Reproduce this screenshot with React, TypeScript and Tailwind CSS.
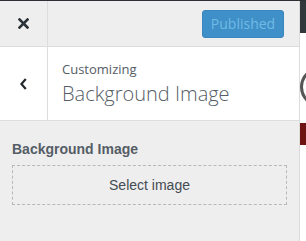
export default function App() {
  return (
    <div className="flex w-[306px] h-[241px] overflow-hidden border-t border-[#2c3034] font-['Liberation_Sans',Arial,sans-serif]">
      {/* Customizer panel */}
      <div className="w-[300px] shrink-0 flex flex-col bg-[#eeeeee] border-r border-[#dcdcdc]">
        {/* Header actions */}
        <div className="flex h-[46px] border-b border-[#dddddd]">
          <button className="w-[48px] shrink-0 flex items-center justify-center border-r border-[#dddddd] text-[#2c3338]">
            <svg width="11" height="11" viewBox="0 0 11 11">
              <path d="M1.5 1.5 L9.5 9.5 M9.5 1.5 L1.5 9.5" stroke="currentColor" strokeWidth="2.6" strokeLinecap="square" fill="none" />
            </svg>
          </button>
          <div className="flex-1 flex items-center justify-end pr-[15px]">
            <button className="w-[82px] h-[28px] rounded-[3px] bg-[#3f8fc8] border border-[#3a87bf] text-[#6fbbe4] text-[14px] font-['Open_Sans',sans-serif]">
              Published
            </button>
          </div>
        </div>

        {/* Section title */}
        <div className="flex h-[74px] bg-white border-b border-[#dddddd]">
          <button className="w-[48px] shrink-0 flex items-center justify-center border-r border-[#dddddd] text-[#23282d]">
            <svg width="7" height="12" viewBox="0 0 7 12">
              <path d="M5.8 1 L1.4 6 L5.8 11" stroke="currentColor" strokeWidth="2.2" fill="none" />
            </svg>
          </button>
          <div className="flex flex-col justify-center pl-[14px] text-[#555d66] font-['Open_Sans',sans-serif]">
            <span className="text-[13px] leading-[18px]">Customizing</span>
            <span className="text-[20px] leading-[28px] font-light mt-[2px]">Background Image</span>
          </div>
        </div>

        {/* Control */}
        <div className="px-[12px] pt-[19px]">
          <div className="text-[14px] leading-[18px] font-bold text-[#555d66]">Background Image</div>
          <button className="mt-[7px] w-full h-[40px] border border-dashed border-[#b4b9be] text-[14px] text-[#444b52]">
            Select image
          </button>
        </div>
      </div>

      {/* Preview edge */}
      <div className="flex-1 flex flex-col bg-white">
        <div className="h-[32px] bg-[#32373c]" />
        <div className="mt-[34px] w-[40px] h-[40px] rounded-full border-[3px] border-[#555555]" />
        <div className="mt-[16px] h-[22px] bg-[#6e1412]" />
      </div>
    </div>
  );
}
